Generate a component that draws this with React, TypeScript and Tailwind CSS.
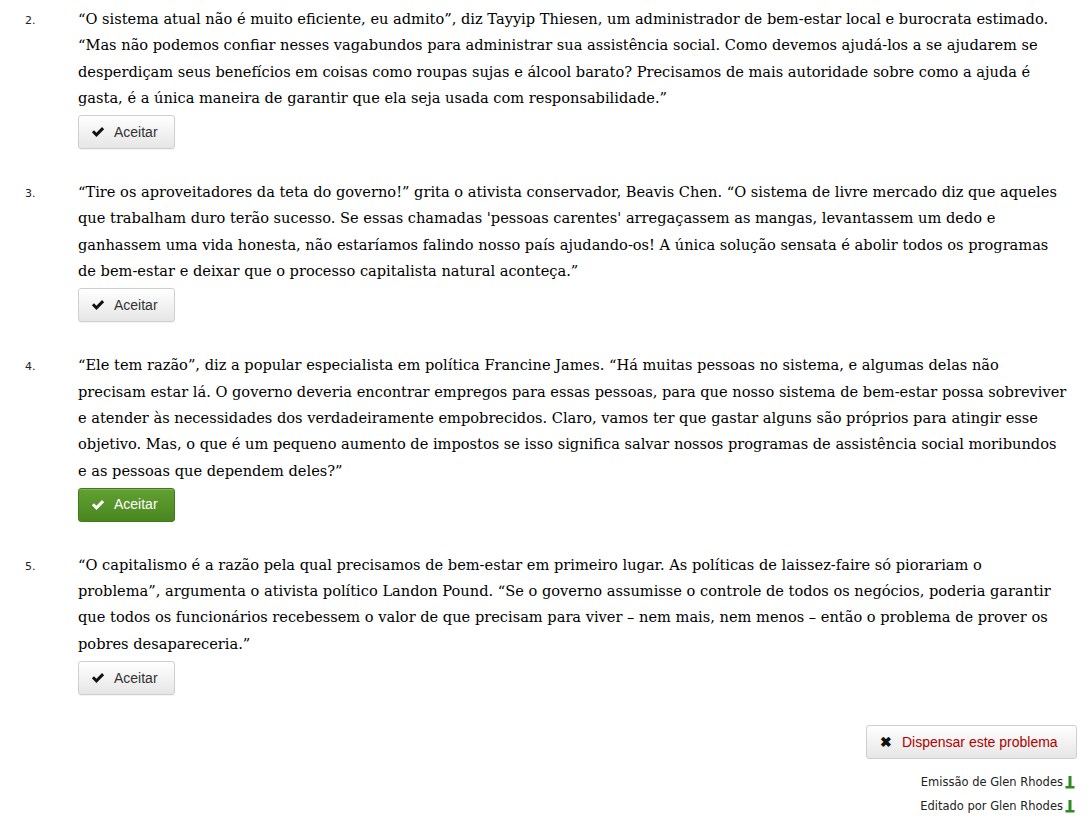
import React from 'react'

const items = [
  {
    n: '2.',
    lines: [
      '“O sistema atual não é muito eficiente, eu admito”, diz Tayyip Thiesen, um administrador de bem-estar local e burocrata estimado.',
      '“Mas não podemos confiar nesses vagabundos para administrar sua assistência social. Como devemos ajudá-los a se ajudarem se',
      'desperdiçam seus benefícios em coisas como roupas sujas e álcool barato? Precisamos de mais autoridade sobre como a ajuda é',
      'gasta, é a única maneira de garantir que ela seja usada com responsabilidade.”',
    ],
    active: false,
  },
  {
    n: '3.',
    lines: [
      '“Tire os aproveitadores da teta do governo!” grita o ativista conservador, Beavis Chen. “O sistema de livre mercado diz que aqueles',
      "que trabalham duro terão sucesso. Se essas chamadas 'pessoas carentes' arregaçassem as mangas, levantassem um dedo e",
      'ganhassem uma vida honesta, não estaríamos falindo nosso país ajudando-os! A única solução sensata é abolir todos os programas',
      'de bem-estar e deixar que o processo capitalista natural aconteça.”',
    ],
    active: false,
  },
  {
    n: '4.',
    lines: [
      '“Ele tem razão”, diz a popular especialista em política Francine James. “Há muitas pessoas no sistema, e algumas delas não',
      'precisam estar lá. O governo deveria encontrar empregos para essas pessoas, para que nosso sistema de bem-estar possa sobreviver',
      'e atender às necessidades dos verdadeiramente empobrecidos. Claro, vamos ter que gastar alguns são próprios para atingir esse',
      'objetivo. Mas, o que é um pequeno aumento de impostos se isso significa salvar nossos programas de assistência social moribundos',
      'e as pessoas que dependem deles?”',
    ],
    active: true,
  },
  {
    n: '5.',
    lines: [
      '“O capitalismo é a razão pela qual precisamos de bem-estar em primeiro lugar. As políticas de laissez-faire só piorariam o',
      'problema”, argumenta o ativista político Landon Pound. “Se o governo assumisse o controle de todos os negócios, poderia garantir',
      'que todos os funcionários recebessem o valor de que precisam para viver – nem mais, nem menos – então o problema de prover os',
      'pobres desapareceria.”',
    ],
    active: false,
  },
]

function CheckIcon({ className }: { className?: string }) {
  return (
    <svg viewBox="0 0 16 16" className={className} fill="currentColor">
      <path d="M1 8.4 L3.4 6 L6.2 8.8 L12.6 2.4 L15 4.8 L6.2 13.6 Z" />
    </svg>
  )
}

function AuthorIcon() {
  return (
    <svg viewBox="0 0 10 14" className="w-[10px] h-[14px]" fill="#2f8a1f">
      <rect x="3.5" y="1" width="3" height="11" />
      <rect x="0.5" y="11" width="9" height="2.5" />
    </svg>
  )
}

export default function App() {
  return (
    <div className="w-[1091px] min-h-[820px] bg-white pt-[6px] pr-[14px]">
      <ol className="flex flex-col gap-[30px]">
        {items.map((item) => (
          <li key={item.n} className="flex">
            <div
              className="w-[78px] shrink-0 pl-[25px] pt-[8px] text-[11px] leading-[14px] text-[#222]"
              style={{ fontFamily: '"DejaVu Sans", Verdana, sans-serif' }}
            >
              {item.n}
            </div>
            <div className="flex-1">
              <div
                className="text-[14.6px] leading-[26.3px] text-[#000]"
                style={{ fontFamily: '"DejaVu Serif", Georgia, serif' }}
              >
                {item.lines.map((l, i) => (
                  <div key={i} className="whitespace-nowrap">
                    {l}
                  </div>
                ))}
              </div>
              {item.active ? (
                <button className="mt-[4px] flex items-center h-[34px] w-[97px] pl-[12px] gap-[9px] rounded-[3px] border border-[#3f7a1a] bg-gradient-to-b from-[#62a032] to-[#4a861f] text-white text-[14px] shadow-[inset_0_1px_0_rgba(255,255,255,0.2)]"
                  style={{ fontFamily: '"Liberation Sans", Arial, sans-serif' }}>
                  <CheckIcon className="w-[14px] h-[14px]" />
                  Aceitar
                </button>
              ) : (
                <button className="mt-[4px] flex items-center h-[34px] w-[97px] pl-[12px] gap-[9px] rounded-[3px] border border-[#cfcfcf] bg-gradient-to-b from-[#ffffff] to-[#e6e6e6] text-[#333] text-[14px] shadow-[0_1px_1px_rgba(0,0,0,0.05)]"
                  style={{ fontFamily: '"Liberation Sans", Arial, sans-serif' }}>
                  <CheckIcon className="w-[14px] h-[14px] text-[#111]" />
                  Aceitar
                </button>
              )}
            </div>
          </li>
        ))}
      </ol>
      <div className="flex flex-col items-end mt-[30px]">
        <button
          className="flex items-center h-[34px] w-[211px] pl-[13px] gap-[10px] rounded-[3px] border border-[#cfcfcf] bg-gradient-to-b from-[#ffffff] to-[#e6e6e6] text-[#b00000] text-[14px]"
          style={{ fontFamily: '"Liberation Sans", Arial, sans-serif' }}
        >
          <span className="text-[#111] text-[14px] font-bold leading-none">✖</span>
          Dispensar este problema
        </button>
        <div
          className="mt-[16px] flex flex-col items-end gap-[10px] text-[11.5px] leading-[14px] text-[#222] pr-[2px]"
          style={{ fontFamily: '"DejaVu Sans", Verdana, sans-serif' }}
        >
          <div className="flex items-center gap-[2px]">
            Emissão de Glen Rhodes <AuthorIcon />
          </div>
          <div className="flex items-center gap-[2px]">
            Editado por Glen Rhodes <AuthorIcon />
          </div>
        </div>
      </div>
    </div>
  )
}
